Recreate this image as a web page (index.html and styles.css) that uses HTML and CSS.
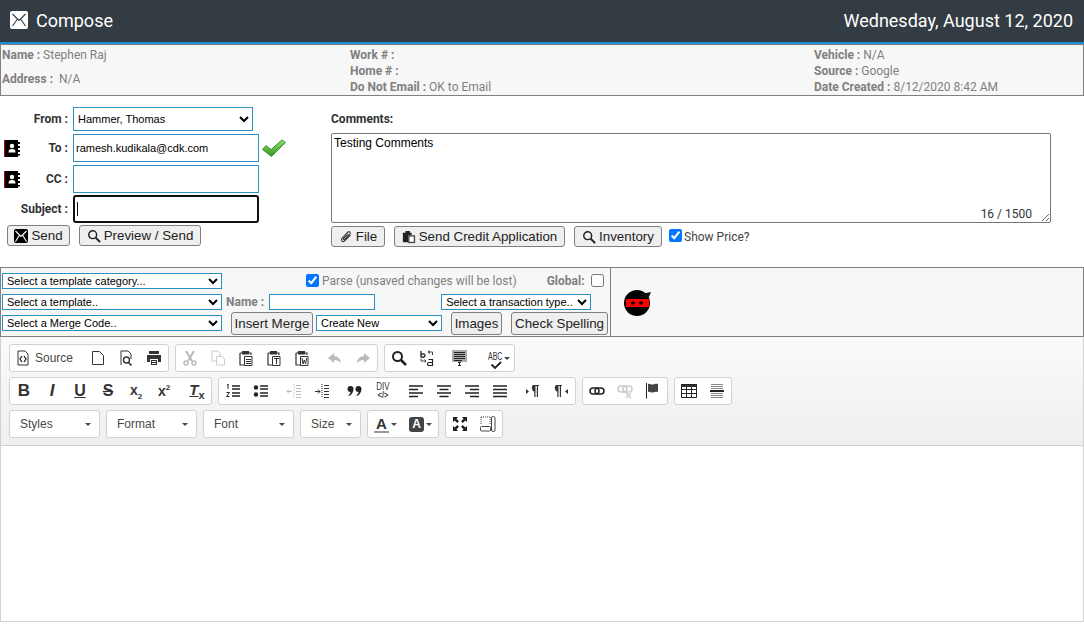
FILE: index.html
```html
<!DOCTYPE html>
<html lang="en">
<head>
    <meta charset="UTF-8">
    <title>Compose</title>
    <link rel="stylesheet" href="styles.css">
</head>
<body>

<svg class="defs" width="0" height="0">
    <defs>
        <linearGradient id="g-check" x1="0" y1="0" x2="0" y2="1">
            <stop offset="0" stop-color="#8fdc6a"/>
            <stop offset="1" stop-color="#2f9a1f"/>
        </linearGradient>
    </defs>
    <symbol id="i-book" viewBox="0 0 17 17">
        <path fill="#c00018" d="M0 0h2v17H0z"/>
        <path fill="#000" d="M1 0h13v17H1z"/>
        <path fill="#000" d="M13 2h3v2h-3zM13 6h3v2h-3zM13 10h3v2h-3zM13 14h3v1.500h-3z"/>
        <circle cx="8" cy="6" r="2.200" fill="#fff"/>
        <path fill="#fff" d="M4.500 12.500c0-2.500 1-3.500 3.500-3.500s3.500 1 3.500 3.500z"/>
    </symbol>
    <symbol id="i-mail" viewBox="0 0 14 14">
        <rect width="14" height="14" rx="2" fill="#000"/>
        <path d="M1.500 2 7 7.500 12.500 2M1.500 12.500 5.500 6M12.500 12.500 8.500 6" fill="none" stroke="#fff" stroke-width="1.100"/>
    </symbol>
    <symbol id="i-search" viewBox="0 0 16 16">
        <circle cx="6.500" cy="6.500" r="4.500" fill="none" stroke="#222" stroke-width="1.700"/>
        <path d="M10 10l5 5" stroke="#222" stroke-width="2.200"/>
    </symbol>
    <symbol id="i-clip" viewBox="0 0 16 16">
        <path d="M13 6 6.500 12.500c-2.500 2-5-.5-3-3l6.500-7c1.700-1.500 4 .5 2.500 2.300L6.500 11c-1 .8-2-.2-1.300-1.200L10.500 4.500" fill="none" stroke="#333" stroke-width="1.200"/>
    </symbol>
    <symbol id="i-paste" viewBox="0 0 16 16">
        <path fill="#222" d="M1 3h3V1h5v2h2v3H7v8H1z"/>
        <path fill="#444" d="M7 6h8v9H7z"/>
        <path fill="#fff" d="M8.500 7.500h5v6h-5z"/>
    </symbol>
    <symbol id="i-src" viewBox="0 0 16 16">
        <path d="M3 1h7l3 3v11H3z" fill="#fff" stroke="#333"/>
        <path d="M7 6 5 9l2 3M9 6l2 3-2 3" fill="none" stroke="#222" stroke-width="1.300"/>
    </symbol>
    <symbol id="i-new" viewBox="0 0 16 16">
        <path d="M2.500 1.500h7l4 4v9h-11z" fill="#fff" stroke="#333"/>
    </symbol>
    <symbol id="i-prev" viewBox="0 0 16 16">
        <path d="M3 15V1h7l3 3v5" fill="none" stroke="#333"/>
        <circle cx="8.500" cy="10" r="3" fill="none" stroke="#333" stroke-width="1.400"/>
        <path d="M10.500 12.500 13.500 15.500" stroke="#333" stroke-width="1.600"/>
    </symbol>
    <symbol id="i-print" viewBox="0 0 16 16">
        <path fill="#333" d="M3 1h10v3H3zM1 5h14v7h-3v-3H4v3H1z"/>
        <path fill="#333" d="M5 10h6v5H5z"/>
        <path fill="#fff" d="M6 11h4v1H6zM6 13h4v1H6z"/>
    </symbol>
    <symbol id="i-cut" viewBox="0 0 16 16">
        <path d="M4 1l6 10M12 1 6 11" stroke="#bbb" stroke-width="2" fill="none"/>
        <circle cx="4" cy="13" r="2" fill="none" stroke="#bbb" stroke-width="1.500"/>
        <circle cx="12" cy="13" r="2" fill="none" stroke="#bbb" stroke-width="1.500"/>
    </symbol>
    <symbol id="i-copy" viewBox="0 0 16 16">
        <path d="M2 1h6l2 2v3M2 1v10h4" fill="none" stroke="#ccc"/>
        <path d="M6.500 6.500H12l2.500 2.500v6h-8z" fill="#fff" stroke="#ccc"/>
    </symbol>
    <symbol id="i-pastep" viewBox="0 0 16 16">
        <path d="M2 3h2M11 3h2v2M2 3v12h4" fill="none" stroke="#333" stroke-width="1.200"/>
        <path fill="#333" d="M4 1h7v3.500H4z"/>
        <path d="M6.500 6.500H14v9H6.500z" fill="#fff" stroke="#333"/>
        <path d="M8 9.500h5M8 11.500h5M8 13.500h5" stroke="#333"/>
    </symbol>
    <symbol id="i-pastet" viewBox="0 0 16 16">
        <path d="M2 3h2M11 3h2v2M2 3v12h4" fill="none" stroke="#333" stroke-width="1.200"/>
        <path fill="#333" d="M4 1h7v3.500H4z"/>
        <path d="M6.500 6.500H14v9H6.500z" fill="#fff" stroke="#333"/>
        <path d="M8 8.500h5M10.500 8.500V14" stroke="#333" stroke-width="1.100"/>
    </symbol>
    <symbol id="i-pastew" viewBox="0 0 16 16">
        <path d="M2 3h2M11 3h2v2M2 3v12h4" fill="none" stroke="#333" stroke-width="1.200"/>
        <path fill="#333" d="M4 1h7v3.500H4z"/>
        <path d="M6.500 6.500H14v9H6.500z" fill="#fff" stroke="#333"/>
        <path d="M8 8l1 6 1.300-4 1.300 4 1-6" fill="none" stroke="#333"/>
    </symbol>
    <symbol id="i-undo" viewBox="0 0 16 16">
        <path fill="#bbb" d="M7 3 1 8l6 5V10c3 0 5 1 7 3-.5-4-3-7-7-7z"/>
    </symbol>
    <symbol id="i-redo" viewBox="0 0 16 16">
        <path fill="#bbb" d="M9 3l6 5-6 5V10c-3 0-5 1-7 3 .5-4 3-7 7-7z"/>
    </symbol>
    <symbol id="i-find" viewBox="0 0 16 16">
        <circle cx="6.500" cy="6.500" r="4.500" fill="none" stroke="#222" stroke-width="2"/>
        <path d="M10 10l5 5" stroke="#222" stroke-width="2.600"/>
    </symbol>
    <symbol id="i-replace" viewBox="0 0 16 16">
        <path d="M2 1v6.500M2 5c2-2 4-1 4 .5S4 8 2 6.500" fill="none" stroke="#222" stroke-width="1.300"/>
        <path d="M9 2h4.500v3M11 0.500 9 2l2 1.500" fill="none" stroke="#444"/>
        <path d="M7 11H2V8.500M5.500 9.500 7 11l-1.500 1.500" fill="none" stroke="#444"/>
        <path d="M9.500 9.500h4v6H10c-2 0-2-3 0-3h3.500" fill="none" stroke="#222" stroke-width="1.200"/>
    </symbol>
    <symbol id="i-selall" viewBox="0 0 16 16">
        <path fill="#aaa" d="M0 0h15v12H0z"/>
        <path d="M2 2.500h11M2 4.500h11M2 6.500h11M2 8.500h11M2 10.500h8" stroke="#222"/>
        <path d="M6 12.500h3M6 15.500h3M7.500 12v3.500" stroke="#222"/>
    </symbol>
    <symbol id="i-spell" viewBox="0 0 12 8">
        <path d="M1.500 3.500 5 7l6-6" fill="none" stroke="#222" stroke-width="1.800"/>
    </symbol>
    <symbol id="i-ol" viewBox="0 0 16 16">
        <path d="M7 3h8M7 6h8M7 10h8M7 13h8" stroke="#222" stroke-width="1.500"/>
        <path d="M3 1v5M2 2l1-1M1.500 9.500h3l-3 4h3" fill="none" stroke="#222"/>
    </symbol>
    <symbol id="i-ul" viewBox="0 0 16 16">
        <path d="M7 3h8M7 6h8M7 10h8M7 13h8" stroke="#222" stroke-width="1.500"/>
        <circle cx="3" cy="4.500" r="2.200" fill="#222"/>
        <circle cx="3" cy="11.500" r="2.200" fill="#222"/>
    </symbol>
    <symbol id="i-out" viewBox="0 0 16 16">
        <path d="M8 1v14" stroke="#bbb" stroke-dasharray="1 1"/>
        <path d="M10 2.500h5M10 5.500h5M10 8.500h5M10 11.500h5M10 14.500h5" stroke="#bbb"/>
        <path d="M6 8.500H1M3 6.500l-2 2 2 2" fill="none" stroke="#bbb"/>
    </symbol>
    <symbol id="i-in" viewBox="0 0 16 16">
        <path d="M8 1v14" stroke="#333" stroke-dasharray="1 1"/>
        <path d="M10 2.500h5M10 5.500h5M10 8.500h5M10 11.500h5M10 14.500h5" stroke="#333"/>
        <path d="M1 8.500h5M4 6.500l2 2-2 2" fill="none" stroke="#333"/>
    </symbol>
    <symbol id="i-quote" viewBox="0 0 16 16">
        <path fill="#222" d="M3.500 3a3 3 0 0 1 3 3c0 3-2 6-4.500 7l-.5-.8c1.200-.8 2-2 2-3.200a3 3 0 0 1 0-6zM11.500 3a3 3 0 0 1 3 3c0 3-2 6-4.500 7l-.5-.8c1.200-.8 2-2 2-3.200a3 3 0 0 1 0-6z"/>
    </symbol>
    <symbol id="i-left" viewBox="0 0 16 16"><path d="M1 3h14M1 6.500h9M1 10h14M1 13.500h9" stroke="#222" stroke-width="1.600"/></symbol>
    <symbol id="i-center" viewBox="0 0 16 16"><path d="M1 3h14M3.500 6.500h9M1 10h14M3.500 13.500h9" stroke="#222" stroke-width="1.600"/></symbol>
    <symbol id="i-right" viewBox="0 0 16 16"><path d="M1 3h14M6 6.500h9M1 10h14M6 13.500h9" stroke="#222" stroke-width="1.600"/></symbol>
    <symbol id="i-just" viewBox="0 0 16 16"><path d="M1 3h14M1 6.500h14M1 10h14M1 13.500h14" stroke="#222" stroke-width="1.600"/></symbol>
    <symbol id="i-ltr" viewBox="0 0 16 16">
        <path fill="#333" d="M1 6l3 2.500L1 11zM8.500 2H14v1h-1v11h-1.200V3H10.500v11H9.300V8.500C6.500 8.500 6 2 8.500 2z"/>
    </symbol>
    <symbol id="i-rtl" viewBox="0 0 16 16">
        <path fill="#333" d="M15 6l-3 2.500L15 11zM3.500 2H9v1H8v11H6.800V3H5.500v11H4.300V8.500C1.500 8.500 1 2 3.500 2z"/>
    </symbol>
    <symbol id="i-link" viewBox="0 0 16 16">
        <rect x="1" y="5" width="9" height="6" rx="3" fill="none" stroke="#222" stroke-width="1.500"/>
        <rect x="6" y="5" width="9" height="6" rx="3" fill="none" stroke="#222" stroke-width="1.500"/>
    </symbol>
    <symbol id="i-unlink" viewBox="0 0 16 16">
        <rect x="1" y="3" width="9" height="6" rx="3" fill="none" stroke="#ccc" stroke-width="1.500"/>
        <rect x="6" y="3" width="9" height="6" rx="3" fill="none" stroke="#ccc" stroke-width="1.500"/>
        <path d="M9 10l5 5M14 10l-5 5" stroke="#ccc" stroke-width="1.500"/>
    </symbol>
    <symbol id="i-flag" viewBox="0 0 16 16">
        <path d="M1.500 0v15.500" stroke="#222"/>
        <path fill="#444" d="M3 1c2-1 3 1 5 .5s3-1 5-.5v8c-2-.5-3 0-5 .5S5 8 3 9z"/>
    </symbol>
    <symbol id="i-table" viewBox="0 0 16 16">
        <path fill="#333" d="M0 1h16v3H0z"/>
        <path d="M.5 1.500h15v13H.5zM.5 6.500h15M.5 10.500h15M5.500 4v10M10.500 4v10" fill="none" stroke="#222"/>
    </symbol>
    <symbol id="i-hr" viewBox="0 0 16 16">
        <path d="M2 1.500h12M2 3.500h12M2 5.500h12M2 10.500h12M2 12.500h12M2 14.500h12" stroke="#888"/>
        <path d="M1 8h14" stroke="#222" stroke-width="2"/>
    </symbol>
    <symbol id="i-max" viewBox="0 0 16 16">
        <path fill="#222" d="M1 1h5L4.500 2.700 7 5.200 5.200 7 2.700 4.500 1 6zM15 1v5l-1.700-1.500L10.800 7 9 5.200l2.500-2.500L10 1zM1 15v-5l1.700 1.500L5.200 9 7 10.800l-2.500 2.500L6 15zM15 15h-5l1.500-1.700L9 10.800 10.800 9l2.500 2.500L15 10z"/>
    </symbol>
    <symbol id="i-blocks" viewBox="0 0 16 16">
        <path d="M1 1h9M1 1v8M10 1v8" fill="none" stroke="#444" stroke-dasharray="1 1"/>
        <rect x="11.500" y="0.500" width="3.500" height="15" rx="1.500" fill="#fff" stroke="#444"/>
        <rect x="0.500" y="10.500" width="10" height="4.500" rx="1" fill="#fff" stroke="#444"/>
    </symbol>
</svg>

<header class="topbar">
    <div class="topbar-title">
        <svg class="topbar-icon" viewBox="0 0 18 18">
            <rect width="18" height="18" rx="2" fill="#fff"/>
            <path d="M2.500 3 9 9.500 15.500 3M2.500 15 7.500 8M15.500 15 10.500 8" fill="none" stroke="#333b43" stroke-width="1.100"/>
        </svg>
        Compose
    </div>
    <div>Wednesday, August 12, 2020</div>
</header>

<section class="info">
    <div class="info-col info-col-a">
        <p><b>Name :</b> Stephen Raj</p>
        <p class="info-address"><b>Address :</b>&nbsp; N/A</p>
    </div>
    <div class="info-col info-col-b">
        <p><b>Work # :</b></p>
        <p><b>Home # :</b></p>
        <p><b>Do Not Email :</b> OK to Email</p>
    </div>
    <div class="info-col">
        <p><b>Vehicle :</b> N/A</p>
        <p><b>Source :</b> Google</p>
        <p><b>Date Created :</b> 8/12/2020 8:42 AM</p>
    </div>
</section>

<section class="compose">
    <div class="fields">
        <div class="field field-from">
            <label class="field-label">From :</label>
            <select class="sel sel-from"><option>Hammer, Thomas</option></select>
        </div>
        <div class="field field-to">
            <label class="field-label"><svg class="book"><use href="#i-book"/></svg>To :</label>
            <input class="txt" type="text" value="ramesh.kudikala@cdk.com">
            <svg class="check" viewBox="0 0 24 18">
                <path d="M.5 10.500 4 6.500 9 10.500 20 .8l3.500 2.700L9.500 17.500z" fill="url(#g-check)" stroke="#2b7d1b" stroke-width="0.800"/>
            </svg>
        </div>
        <div class="field field-cc">
            <label class="field-label"><svg class="book"><use href="#i-book"/></svg>CC :</label>
            <input class="txt" type="text">
        </div>
        <div class="field field-subject">
            <label class="field-label">Subject :</label>
            <input class="txt txt-focus" type="text">
        </div>
        <div class="actions">
            <button class="btn btn-send"><svg class="btn-ico"><use href="#i-mail"/></svg>Send</button>
            <button class="btn btn-preview"><svg class="btn-ico"><use href="#i-search"/></svg>Preview / Send</button>
        </div>
    </div>
    <div class="comments">
        <label class="comments-label">Comments:</label>
        <div class="comments-box">
            <textarea class="comments-text">Testing Comments</textarea>
            <span class="counter">16 / 1500</span>
        </div>
        <div class="actions">
            <button class="btn btn-file"><svg class="btn-ico"><use href="#i-clip"/></svg>File</button>
            <button class="btn btn-credit"><svg class="btn-ico"><use href="#i-paste"/></svg>Send Credit Application</button>
            <button class="btn btn-inv"><svg class="btn-ico"><use href="#i-search"/></svg>Inventory</button>
            <label class="show-price"><input type="checkbox" checked>Show Price?</label>
        </div>
    </div>
</section>

<section class="templates">
    <div class="tpl-main">
        <div class="tpl-row tpl-row-1">
            <select class="sel sel-tpl"><option>Select a template category...</option></select>
            <label class="parse"><input type="checkbox" checked>Parse (unsaved changes will be lost)</label>
            <label class="global"><b>Global:</b><input type="checkbox"></label>
        </div>
        <div class="tpl-row tpl-row-2">
            <select class="sel sel-tpl"><option>Select a template..</option></select>
            <label class="tpl-name"><b>Name :</b></label>
            <input class="txt txt-name" type="text">
            <select class="sel sel-trans"><option>Select a transaction type..</option></select>
        </div>
        <div class="tpl-row tpl-row-3">
            <select class="sel sel-tpl"><option>Select a Merge Code..</option></select>
            <button class="btn btn-merge">Insert Merge</button>
            <select class="sel sel-new"><option>Create New</option></select>
            <button class="btn btn-images">Images</button>
            <button class="btn btn-spell">Check Spelling</button>
        </div>
    </div>
    <div class="tpl-side">
        <svg class="ninja" viewBox="0 0 30 28">
            <circle cx="13" cy="14" r="13" fill="#000"/>
            <path d="M17 5l10-2-2 5-3 1z" fill="#111"/>
            <path d="M2 10h23v8H2z" fill="#f00"/>
            <rect x="7" y="12.500" width="4" height="3" rx="1.500" fill="#000"/>
            <rect x="15" y="12.500" width="4" height="3" rx="1.500" fill="#000"/>
        </svg>
    </div>
</section>

<section class="editor">
    <div class="toolbar">
        <div class="tb-row">
            <div class="tb-group">
                <span class="tb-btn tb-source"><svg class="ico"><use href="#i-src"/></svg>Source</span>
                <span class="tb-btn"><svg class="ico"><use href="#i-new"/></svg></span>
                <span class="tb-btn"><svg class="ico"><use href="#i-prev"/></svg></span>
                <span class="tb-btn"><svg class="ico"><use href="#i-print"/></svg></span>
            </div>
            <div class="tb-group">
                <span class="tb-btn"><svg class="ico"><use href="#i-cut"/></svg></span>
                <span class="tb-btn"><svg class="ico"><use href="#i-copy"/></svg></span>
                <span class="tb-btn"><svg class="ico"><use href="#i-pastep"/></svg></span>
                <span class="tb-btn"><svg class="ico"><use href="#i-pastet"/></svg></span>
                <span class="tb-btn"><svg class="ico"><use href="#i-pastew"/></svg></span>
                <i class="tb-sep"></i>
                <span class="tb-btn"><svg class="ico"><use href="#i-undo"/></svg></span>
                <span class="tb-btn"><svg class="ico"><use href="#i-redo"/></svg></span>
            </div>
            <div class="tb-group">
                <span class="tb-btn"><svg class="ico"><use href="#i-find"/></svg></span>
                <span class="tb-btn"><svg class="ico"><use href="#i-replace"/></svg></span>
                <i class="tb-sep"></i>
                <span class="tb-btn"><svg class="ico"><use href="#i-selall"/></svg></span>
                <i class="tb-sep"></i>
                <span class="tb-btn tb-abc"><span class="abc">ABC</span><svg class="ico-spell"><use href="#i-spell"/></svg><i class="caret"></i></span>
            </div>
        </div>
        <div class="tb-row">
            <div class="tb-group">
                <span class="tb-btn tb-b">B</span>
                <span class="tb-btn tb-i">I</span>
                <span class="tb-btn tb-u">U</span>
                <span class="tb-btn tb-s">S</span>
                <span class="tb-btn tb-x"><span>x<sub>2</sub></span></span>
                <span class="tb-btn tb-x"><span>x<sup>2</sup></span></span>
                <i class="tb-sep"></i>
                <span class="tb-btn tb-rf"><span><u>T</u><sub>x</sub></span></span>
            </div>
            <div class="tb-group">
                <span class="tb-btn"><svg class="ico"><use href="#i-ol"/></svg></span>
                <span class="tb-btn"><svg class="ico"><use href="#i-ul"/></svg></span>
                <i class="tb-sep"></i>
                <span class="tb-btn"><svg class="ico"><use href="#i-out"/></svg></span>
                <span class="tb-btn"><svg class="ico"><use href="#i-in"/></svg></span>
                <i class="tb-sep"></i>
                <span class="tb-btn"><svg class="ico"><use href="#i-quote"/></svg></span>
                <span class="tb-btn tb-div">DIV<small>&lt;/&gt;</small></span>
                <i class="tb-sep"></i>
                <span class="tb-btn"><svg class="ico"><use href="#i-left"/></svg></span>
                <span class="tb-btn"><svg class="ico"><use href="#i-center"/></svg></span>
                <span class="tb-btn"><svg class="ico"><use href="#i-right"/></svg></span>
                <span class="tb-btn"><svg class="ico"><use href="#i-just"/></svg></span>
                <i class="tb-sep"></i>
                <span class="tb-btn"><svg class="ico"><use href="#i-ltr"/></svg></span>
                <span class="tb-btn"><svg class="ico"><use href="#i-rtl"/></svg></span>
            </div>
            <div class="tb-group">
                <span class="tb-btn"><svg class="ico"><use href="#i-link"/></svg></span>
                <span class="tb-btn"><svg class="ico"><use href="#i-unlink"/></svg></span>
                <span class="tb-btn"><svg class="ico"><use href="#i-flag"/></svg></span>
            </div>
            <div class="tb-group">
                <span class="tb-btn"><svg class="ico"><use href="#i-table"/></svg></span>
                <span class="tb-btn"><svg class="ico"><use href="#i-hr"/></svg></span>
            </div>
        </div>
        <div class="tb-row">
            <div class="tb-group tb-combo tb-combo-wide">Styles<i class="caret"></i></div>
            <div class="tb-group tb-combo tb-combo-wide">Format<i class="caret"></i></div>
            <div class="tb-group tb-combo tb-combo-wide">Font<i class="caret"></i></div>
            <div class="tb-group tb-combo tb-combo-size">Size<i class="caret"></i></div>
            <div class="tb-group">
                <span class="tb-btn tb-color"><span class="color-a">A</span><i class="caret"></i></span>
                <span class="tb-btn tb-color"><span class="color-bg">A</span><i class="caret"></i></span>
            </div>
            <div class="tb-group">
                <span class="tb-btn"><svg class="ico"><use href="#i-max"/></svg></span>
                <span class="tb-btn"><svg class="ico"><use href="#i-blocks"/></svg></span>
            </div>
        </div>
    </div>
    <div class="editor-body"></div>
</section>

</body>
</html>
```

FILE: styles.css
```css
* {
    box-sizing: border-box;
}

body {
    margin: 0;
    font-family: Roboto, sans-serif;
    font-size: 12px;
    background-color: #fff;
    color: #222;
}

.defs {
    display: block;
    height: 0;
}

p {
    margin: 0;
}

/* top bar */
.topbar {
    display: flex;
    justify-content: space-between;
    align-items: center;
    height: 44px;
    padding: 0 11px 2px 10px;
    background-color: #333b43;
    border-bottom: 2px solid #1b8fd6;
    color: #fff;
    font-size: 18px;
}

.topbar-title {
    display: flex;
    align-items: center;
}

.topbar-icon {
    width: 18px;
    height: 18px;
    margin-right: 8px;
}

/* customer info */
.info {
    display: flex;
    height: 52px;
    padding: 2px 0 0 1px;
    background-color: #f7f7f7;
    border: 1px solid #808080;
    color: #808080;
}

.info p {
    height: 16px;
    line-height: 16px;
    white-space: nowrap;
}

.info b {
    font-weight: 700;
}

.info-col-a {
    width: 348px;
}

.info-col-b {
    width: 464px;
}

.info-address {
    margin-top: 8px;
}

/* compose form */
.compose {
    display: flex;
    height: 171px;
    padding-top: 11px;
}

.fields {
    width: 331px;
}

.field {
    display: flex;
    align-items: center;
}

.field-from {
    height: 24px;
    margin-bottom: 3px;
}

.field-to {
    height: 28px;
    margin-bottom: 3px;
}

.field-cc {
    height: 28px;
    margin-bottom: 2px;
}

.field-subject {
    height: 28px;
    margin-bottom: 2px;
}

.field-label {
    display: flex;
    align-items: center;
    justify-content: flex-end;
    width: 68px;
    margin-right: 5px;
    padding-left: 4px;
    font-weight: 700;
    color: #333;
}

.book {
    width: 17px;
    height: 17px;
    margin-right: auto;
}

.sel {
    height: 24px;
    border: 1px solid #2b8fc0;
    border-radius: 0;
    background-color: #fff;
    color: #000;
    font-family: "Liberation Sans", sans-serif;
    font-size: 11px;
}

.sel-from {
    width: 180px;
}

.txt {
    width: 186px;
    height: 28px;
    padding: 0 2px;
    border: 1px solid #2b8fc0;
    font-family: "Liberation Sans", sans-serif;
    font-size: 11px;
    color: #000;
    outline: none;
}

.txt-focus {
    border: 2px solid #111;
    border-radius: 3px;
    background: linear-gradient(#111, #111) 2px center / 1px 14px no-repeat #fff;
}

.check {
    width: 24px;
    height: 18px;
    margin-left: 3px;
}

.actions {
    display: flex;
    align-items: center;
}

.fields .actions {
    padding-left: 7px;
}

.btn {
    display: inline-flex;
    align-items: center;
    justify-content: center;
    height: 21px;
    padding: 0;
    background-color: #efefef;
    border: 1px solid #808080;
    border-radius: 3px;
    color: #222;
    font-family: "Liberation Sans", sans-serif;
    font-size: 13.33px;
}

.btn-ico {
    width: 14px;
    height: 14px;
    margin-right: 3px;
}

.btn-send {
    width: 63px;
    margin-right: 9px;
}

.btn-preview {
    width: 122px;
}

.comments {
    width: 720px;
}

.comments-label {
    display: block;
    height: 26px;
    line-height: 24px;
    font-weight: 700;
    color: #333;
}

.comments-box {
    position: relative;
    height: 90px;
    margin-bottom: 3px;
}

.comments-text {
    display: block;
    width: 100%;
    height: 90px;
    padding: 2px;
    border: 1px solid #767676;
    border-radius: 2px;
    font-family: "Liberation Sans", sans-serif;
    font-size: 12px;
    color: #000;
}

.counter {
    position: absolute;
    right: 19px;
    bottom: 2px;
    color: #333;
}

.btn-file {
    width: 54px;
    margin-right: 9px;
}

.btn-credit {
    width: 171px;
    margin-right: 9px;
}

.btn-inv {
    width: 88px;
    margin-right: 7px;
}

.show-price {
    display: flex;
    align-items: center;
    color: #444;
}

.show-price input,
.parse input,
.global input {
    width: 13px;
    height: 13px;
    margin: 0 2px 2px 0;
}

/* templates */
.templates {
    display: flex;
    height: 70px;
    background-color: #f7f7f7;
    border: 1px solid #808080;
}

.tpl-main {
    width: 610px;
    padding-top: 5px;
    padding-left: 1px;
    border-right: 1px solid #808080;
}

.tpl-row {
    display: flex;
    align-items: center;
    height: 16px;
    margin-bottom: 5px;
}

.tpl-row .sel {
    height: 16px;
    padding: 0;
    font-size: 11px;
}

.sel-tpl {
    width: 220px;
    flex: none;
}

.parse {
    display: flex;
    align-items: center;
    margin-left: 84px;
    color: #808080;
}

.parse input {
    margin-right: 3px;
}

.global {
    display: flex;
    align-items: center;
    margin-left: 30px;
    color: #808080;
}

.global input {
    margin-left: 6px;
}

.tpl-name {
    margin-left: 4px;
    color: #808080;
}

.txt-name {
    width: 106px;
    height: 16px;
    margin-left: 5px;
}

.sel-trans {
    width: 150px;
    margin-left: 66px;
}

.tpl-row-3 .btn {
    flex: none;
    height: 23px;
}

.btn-merge {
    width: 82px;
    margin-left: 9px;
}

.tpl-row .sel-new {
    width: 126px;
    margin-left: 3px;
}

.btn-images {
    width: 51px;
    margin-left: 9px;
}

.btn-spell {
    width: 97px;
    margin-left: 9px;
}

.tpl-side {
    padding: 21px 0 0 13px;
}

.ninja {
    width: 30px;
    height: 28px;
}

/* editor */
.editor {
    display: flex;
    flex-direction: column;
    height: 285px;
    border: 1px solid #d1d1d1;
    border-top: 0;
}

.toolbar {
    flex: none;
    height: 109px;
    padding: 7px 0 0 8px;
    background: linear-gradient(#fafafa, #efefef);
    border-bottom: 1px solid #d1d1d1;
}

.tb-row {
    display: flex;
    gap: 6px;
    height: 28px;
    margin-bottom: 5px;
}

.tb-group {
    display: flex;
    align-items: center;
    height: 28px;
    background-color: #fff;
    border: 1px solid #d1d1d1;
    border-radius: 3px;
}

.tb-btn {
    position: relative;
    display: flex;
    align-items: center;
    justify-content: center;
    flex: none;
    width: 28px;
    height: 26px;
    color: #333;
    font-family: "Liberation Sans", sans-serif;
}

.tb-sep {
    flex: none;
    width: 5px;
}

.ico {
    width: 16px;
    height: 16px;
}

.tb-source {
    justify-content: flex-start;
    width: 74px;
    padding-left: 5px;
    font-size: 12px;
    color: #474747;
}

.tb-source .ico {
    margin-right: 4px;
}

.tb-abc {
    flex-direction: column;
    align-items: flex-start;
    width: 35px;
    padding: 4px 0 0 9px;
}

.abc {
    height: 9px;
    font-size: 10px;
    line-height: 9px;
    transform: scaleX(0.7);
    transform-origin: left center;
}

.ico-spell {
    width: 12px;
    height: 8px;
    margin-left: 2px;
}

.tb-abc .caret {
    position: absolute;
    right: 4px;
    top: 12px;
    margin: 0;
}

.tb-b {
    font-size: 17px;
    font-weight: 700;
}

.tb-i {
    font-size: 17px;
    font-weight: 700;
    font-style: italic;
}

.tb-u {
    font-size: 16px;
    font-weight: 700;
    text-decoration: underline;
}

.tb-s {
    font-size: 16px;
    font-weight: 700;
    text-decoration: line-through;
}

.tb-x {
    font-size: 14px;
    font-weight: 700;
}

.tb-x sub,
.tb-x sup {
    font-size: 8px;
}

.tb-rf {
    font-size: 15px;
    font-weight: 700;
    font-style: italic;
}

.tb-rf sub {
    font-style: normal;
    font-size: 11px;
}

.tb-div {
    flex-direction: column;
    font-size: 10px;
    line-height: 9px;
    transform: scaleX(0.8);
}

.tb-div small {
    font-size: 9px;
    font-weight: 700;
}

.tb-combo {
    justify-content: space-between;
    padding: 0 5px 0 10px;
    font-family: "Liberation Sans", sans-serif;
    font-size: 12px;
    color: #484848;
}

.tb-combo-wide {
    width: 91px;
}

.tb-combo-size {
    width: 61px;
}

.caret {
    display: inline-block;
    width: 0;
    height: 0;
    margin-left: 2px;
    border-left: 3px solid transparent;
    border-right: 3px solid transparent;
    border-top: 3px solid #474747;
}

.tb-combo .caret {
    margin-right: 3px;
}

.tb-color {
    width: 35px;
}

.color-a {
    padding: 0 2px;
    border-bottom: 2px solid #999;
    font-size: 15px;
    font-weight: 700;
    line-height: 15px;
}

.color-bg {
    width: 15px;
    height: 15px;
    background-color: #444;
    border-radius: 3px;
    color: #fff;
    font-size: 12px;
    font-weight: 700;
    line-height: 15px;
    text-align: center;
}

.editor-body {
    flex: 1;
    background-color: #fff;
}
```
